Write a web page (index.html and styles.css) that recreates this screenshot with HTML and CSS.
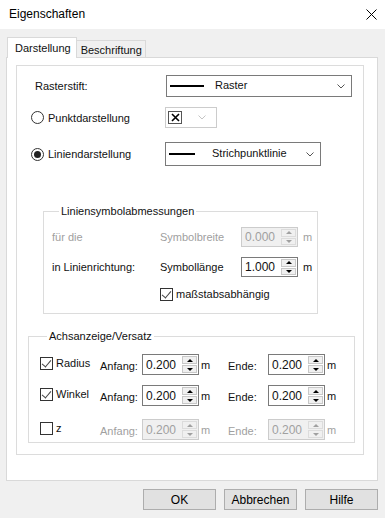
FILE: index.html
```html
<!DOCTYPE html>
<html lang="de">
<head>
    <meta charset="UTF-8">
    <meta name="viewport" content="width=device-width, initial-scale=1.0">
    <title>Eigenschaften</title>
    <link rel="stylesheet" href="styles.css">
</head>
<body>
    <div class="window">
        <div class="titlebar">
            <span class="title">Eigenschaften</span>
            <svg class="close" width="11" height="11" viewBox="0 0 11 11">
                <path d="M0.5 0.5 L10.5 10.5 M10.5 0.5 L0.5 10.5" stroke="#000" stroke-width="1" fill="none"/>
            </svg>
        </div>

        <div class="dialog">
            <div class="tabs">
                <div class="tab active">Darstellung</div>
                <div class="tab">Beschriftung</div>
            </div>

            <div class="panel">
                <div class="frame">
                    <div class="row row-raster">
                        <span class="label">Rasterstift:</span>
                        <div class="combo combo-raster">
                            <span class="line-sample"></span>
                            <span class="combo-text">Raster</span>
                            <svg class="chevron" width="8" height="5" viewBox="0 0 8 5"><path d="M0.5 0.5 L4 4 L7.5 0.5" stroke="#555" fill="none"/></svg>
                        </div>
                    </div>

                    <div class="row row-punkt">
                        <span class="label radio-label"><span class="radio"></span>Punktdarstellung</span>
                        <div class="combo combo-point disabled">
                            <span class="x-box">
                                <svg width="9" height="9" viewBox="0 0 9 9"><path d="M1 1 L8 8 M8 1 L1 8" stroke="#000" stroke-width="1.6" fill="none"/></svg>
                            </span>
                            <svg class="chevron" width="8" height="5" viewBox="0 0 8 5"><path d="M0.5 0.5 L4 4 L7.5 0.5" stroke="#c4c4c4" fill="none"/></svg>
                        </div>
                    </div>

                    <div class="row row-linie">
                        <span class="label radio-label"><span class="radio checked"></span>Liniendarstellung</span>
                        <div class="combo combo-line">
                            <span class="line-sample short"></span>
                            <span class="combo-text">Strichpunktlinie</span>
                            <svg class="chevron" width="8" height="5" viewBox="0 0 8 5"><path d="M0.5 0.5 L4 4 L7.5 0.5" stroke="#555" fill="none"/></svg>
                        </div>
                    </div>

                    <fieldset class="group group-symbol">
                        <legend>Liniensymbolabmessungen</legend>
                        <div class="sym-row">
                            <span class="sym-c1 muted">für die</span>
                            <span class="sym-c2 muted">Symbolbreite</span>
                            <div class="spin disabled">
                                <span class="spin-value">0.000</span>
                                <span class="spin-btns"><span class="up"></span><span class="down"></span></span>
                            </div>
                            <span class="unit muted">m</span>
                        </div>
                        <div class="sym-row">
                            <span class="sym-c1">in Linienrichtung:</span>
                            <span class="sym-c2">Symbollänge</span>
                            <div class="spin">
                                <span class="spin-value">1.000</span>
                                <span class="spin-btns"><span class="up"></span><span class="down"></span></span>
                            </div>
                            <span class="unit">m</span>
                        </div>
                        <div class="check-row">
                            <span class="check on"></span>maßstabsabhängig
                        </div>
                    </fieldset>

                    <fieldset class="group group-axis">
                        <legend>Achsanzeige/Versatz</legend>
                        <div class="axis-row">
                            <span class="axis-check"><span class="check on"></span>Radius</span>
                            <span class="axis-lbl">Anfang:</span>
                            <div class="spin tall">
                                <span class="spin-value">0.200</span>
                                <span class="spin-btns"><span class="up"></span><span class="down"></span></span>
                            </div>
                            <span class="axis-unit">m</span>
                            <span class="axis-lbl end">Ende:</span>
                            <div class="spin tall">
                                <span class="spin-value">0.200</span>
                                <span class="spin-btns"><span class="up"></span><span class="down"></span></span>
                            </div>
                            <span class="axis-unit">m</span>
                        </div>
                        <div class="axis-row">
                            <span class="axis-check"><span class="check on"></span>Winkel</span>
                            <span class="axis-lbl">Anfang:</span>
                            <div class="spin tall">
                                <span class="spin-value">0.200</span>
                                <span class="spin-btns"><span class="up"></span><span class="down"></span></span>
                            </div>
                            <span class="axis-unit">m</span>
                            <span class="axis-lbl end">Ende:</span>
                            <div class="spin tall">
                                <span class="spin-value">0.200</span>
                                <span class="spin-btns"><span class="up"></span><span class="down"></span></span>
                            </div>
                            <span class="axis-unit">m</span>
                        </div>
                        <div class="axis-row row-z">
                            <span class="axis-check"><span class="check"></span>z</span>
                            <span class="axis-lbl muted">Anfang:</span>
                            <div class="spin tall disabled">
                                <span class="spin-value">0.200</span>
                                <span class="spin-btns"><span class="up"></span><span class="down"></span></span>
                            </div>
                            <span class="axis-unit muted">m</span>
                            <span class="axis-lbl end muted">Ende:</span>
                            <div class="spin tall disabled">
                                <span class="spin-value">0.200</span>
                                <span class="spin-btns"><span class="up"></span><span class="down"></span></span>
                            </div>
                            <span class="axis-unit muted">m</span>
                        </div>
                    </fieldset>
                </div>
            </div>

            <div class="buttons">
                <button class="btn">OK</button>
                <button class="btn">Abbrechen</button>
                <button class="btn">Hilfe</button>
            </div>
        </div>
    </div>
</body>
</html>
```

FILE: styles.css
```css
* {
    margin: 0;
    padding: 0;
    box-sizing: border-box;
}
body {
    font-family: 'Liberation Sans', Arial, sans-serif;
    font-size: 11px;
    color: #111;
    background-color: #f0f0f0;
    width: 385px;
    height: 518px;
    overflow: hidden;
}
.window {
    width: 385px;
    height: 518px;
    background-color: #f0f0f0;
}
.titlebar {
    height: 29px;
    background-color: #fff;
    display: flex;
    align-items: center;
    justify-content: space-between;
    padding: 0 8px 0 9px;
}
.title {
    font-size: 12px;
    color: #000;
    padding-bottom: 1px;
}
.close {
    display: block;
    margin-bottom: 1px;
}

/* tabs */
.tabs {
    display: flex;
    align-items: flex-end;
    height: 20px;
    margin-top: 8px;
    padding-left: 7px;
}
.tab {
    height: 17px;
    padding: 1px 3px 0 4px;
    border: 1px solid #d9d9d9;
    border-bottom: none;
    background-color: #f0f0f0;
    display: flex;
    align-items: center;
    font-size: 11px;
}
.tab.active {
    height: 21px;
    margin-bottom: -1px;
    padding: 0 5px 1px 7px;
    background-color: #fff;
    position: relative;
    z-index: 1;
}
.tab + .tab {
    border-left: none;
}
.panel {
    margin: 0 7px 0 6px;
    height: 424px;
    background-color: #fff;
    border: 1px solid #d9d9d9;
    padding-top: 7px;
}
.frame {
    margin: 0 13px 0 9px;
    height: 390px;
    border: 1px solid #dcdcdc;
}

/* top rows */
.row {
    display: flex;
    align-items: center;
}
.label {
    flex-shrink: 0;
}
.row-raster {
    margin-top: 9px;
    padding-left: 18px;
}
.row-raster .label {
    width: 131px;
}
.row-punkt {
    margin-top: 10px;
    padding-left: 14px;
}
.row-linie {
    margin-top: 14px;
    padding-left: 14px;
}
.radio-label {
    width: 134px;
    display: flex;
    align-items: center;
}
.radio {
    width: 13px;
    height: 13px;
    border: 1px solid #333;
    border-radius: 50%;
    margin-right: 4px;
    display: flex;
    align-items: center;
    justify-content: center;
    background-color: #fff;
}
.radio.checked::after {
    content: "";
    width: 7px;
    height: 7px;
    border-radius: 50%;
    background-color: #222;
}
.combo {
    border: 1px solid #7a7a7a;
    background-color: #fff;
    display: flex;
    align-items: center;
    padding-left: 3px;
    padding-right: 6px;
}
.combo.disabled {
    border-color: #cccccc;
}
.combo-raster {
    width: 186px;
    height: 22px;
}
.combo-point {
    width: 52px;
    height: 21px;
    padding-left: 2px;
    padding-right: 10px;
}
.combo-line {
    width: 156px;
    height: 24px;
}
.line-sample {
    width: 34px;
    height: 2px;
    background-color: #000;
    margin-right: 11px;
    flex-shrink: 0;
}
.line-sample.short {
    width: 26px;
    margin-right: 17px;
}
.combo-text {
    flex: 1;
    padding-bottom: 2px;
}
.chevron {
    display: block;
    flex-shrink: 0;
}
.x-box {
    width: 14px;
    height: 13px;
    border: 1px solid #555;
    display: flex;
    align-items: center;
    justify-content: center;
    margin-right: auto;
}
.x-box svg {
    display: block;
}

/* group boxes */
.group {
    border: 1px solid #dcdcdc;
    padding: 0;
}
.group legend {
    margin-left: 7px;
    padding: 0 2px;
    line-height: 13px;
}
.group-symbol {
    margin: 39px 0 0 26px;
    width: 275px;
    padding: 9px 0 12px 8px;
}
.group-axis {
    margin: 16px 0 0 11px;
    width: 324px;
    padding: 11px 0 2px 11px;
}
.muted {
    color: #a0a0a0;
}
.sym-row {
    display: flex;
    align-items: center;
    height: 20px;
}
.sym-row + .sym-row {
    margin-top: 10px;
}
.sym-c1 {
    width: 108px;
}
.sym-c2 {
    width: 81px;
}
.unit {
    margin-left: 5px;
}
.check-row {
    display: flex;
    align-items: center;
    margin-top: 10px;
    padding-left: 108px;
    height: 14px;
}

/* spin boxes */
.spin {
    width: 57px;
    height: 20px;
    border: 1px solid #7a7a7a;
    background-color: #fff;
    display: flex;
    align-items: stretch;
    font-size: 12px;
    flex-shrink: 0;
}
.spin.tall {
    height: 21px;
}
.spin.disabled {
    border-color: #cccccc;
    background-color: #f0f0f0;
    color: #a0a0a0;
}
.spin-value {
    flex: 1;
    display: flex;
    align-items: center;
    padding-left: 3px;
}
.spin-btns {
    width: 16px;
    display: flex;
    flex-direction: column;
    gap: 1px;
    padding: 1px 1px 1px 0;
}
.spin-btns span {
    flex: 1;
    border: 1px solid #c8c8c8;
    background-color: #f0f0f0;
    display: flex;
    align-items: center;
    justify-content: center;
}
.spin-btns .up::after,
.spin-btns .down::after {
    content: "";
    width: 0;
    height: 0;
    border-left: 3px solid transparent;
    border-right: 3px solid transparent;
}
.spin-btns .up::after {
    border-bottom: 3px solid #000;
}
.spin-btns .down::after {
    border-top: 3px solid #000;
}
.spin.disabled .spin-btns span {
    border-color: #dcdcdc;
}
.spin.disabled .up::after {
    border-bottom-color: #a0a0a0;
}
.spin.disabled .down::after {
    border-top-color: #a0a0a0;
}

/* checkboxes */
.check {
    width: 13px;
    height: 13px;
    border: 1px solid #333;
    background-color: #fff;
    margin-right: 3px;
    flex-shrink: 0;
    position: relative;
}
.check.on::after {
    content: "";
    position: absolute;
    left: 3px;
    top: 0px;
    width: 4px;
    height: 8px;
    border-right: 1px solid #444;
    border-bottom: 1px solid #444;
    transform: rotate(40deg);
}

/* axis rows */
.axis-row {
    display: flex;
    align-items: center;
    height: 21px;
}
.axis-row + .axis-row {
    margin-top: 10px;
}
.axis-row.row-z {
    margin-top: 13px;
}
.axis-check {
    width: 60px;
    display: flex;
    align-items: center;
    padding-bottom: 3px;
}
.axis-lbl {
    width: 42px;
    padding-top: 2px;
}
.axis-lbl.end {
    width: 40px;
}
.axis-unit {
    width: 29px;
    padding-left: 2px;
}

/* buttons */
.buttons {
    display: flex;
    justify-content: flex-end;
    gap: 8px;
    margin-top: 8px;
    padding-right: 7px;
}
.btn {
    width: 73px;
    height: 21px;
    background-color: #e1e1e1;
    border: 1px solid #adadad;
    font-family: 'Liberation Sans', Arial, sans-serif;
    font-size: 12px;
    color: #000;
}
```
